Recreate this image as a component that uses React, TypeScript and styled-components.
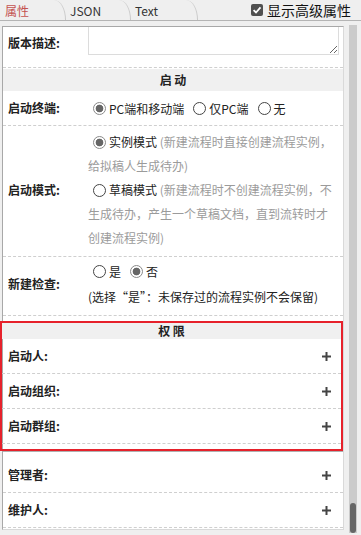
import React from 'react'
import styled, { createGlobalStyle } from 'styled-components'

const GlobalStyle = createGlobalStyle`
  html, body {
    margin: 0;
    padding: 0;
    background: #efefef;
  }
  body {
    font-family: "Noto Sans CJK SC", "Microsoft YaHei", sans-serif;
    font-size: 12px;
    color: #222;
  }
  * {
    box-sizing: border-box;
  }
`

function Radio({ checked }: { checked?: boolean }) {
  return <RadioDot $checked={!!checked} />
}

const plus = (
  <svg width="9" height="9" viewBox="0 0 9 9">
    <path d="M4.5 0v9M0 4.5h9" stroke="#444" strokeWidth="2" />
  </svg>
)

const checkIcon = (
  <svg width="12" height="12" viewBox="0 0 12 12">
    <rect x="0" y="0" width="12" height="12" rx="2" fill="#505050" />
    <path d="M2.6 6.1 L5 8.5 L9.5 3.4" stroke="#fff" strokeWidth="1.8" fill="none" />
  </svg>
)

function App() {
  return (
    <Page>
      <GlobalStyle />
      <TabBar>
        <Tab $w={66} $active>属性</Tab>
        <Tab $w={65}>JSON</Tab>
        <Tab $w={67}>Text</Tab>
        <Spacer />
        <AdvancedToggle>
          {checkIcon}
          <span>显示高级属性</span>
        </AdvancedToggle>
      </TabBar>

      <Main>
        <Panel>
          <DescRow>
            <Label>版本描述:</Label>
            <TextArea />
          </DescRow>

          <SectionHeader $h={22} $top={1}>启 动</SectionHeader>
          <FieldRow $h={35}>
            <Label>启动终端:</Label>
            <RadioGroup>
              <Option><Radio checked />PC端和移动端</Option>
              <Option><Radio />仅PC端</Option>
              <Option><Radio />无</Option>
            </RadioGroup>
          </FieldRow>
          <FieldRow $h={131} $pad="4px 4px 6px 5px">
            <Label>启动模式:</Label>
            <div>
              <ModeLine>
                <Radio checked />实例模式 <Hint>(新建流程时直接创建流程实例，给拟稿人生成待办)</Hint>
              </ModeLine>
              <ModeLine>
                <Radio />草稿模式 <Hint>(新建流程时不创建流程实例，不生成待办，产生一个草稿文档，直到流转时才创建流程实例)</Hint>
              </ModeLine>
            </div>
          </FieldRow>
          <FieldRow $h={59} $pad="2px 4px 6px 5px">
            <Label>新建检查:</Label>
            <div>
              <RadioGroup>
                <Option><Radio />是</Option>
                <Option><Radio checked />否</Option>
              </RadioGroup>
              <NoteLine>(选择“是”：未保存过的流程实例不会保留)</NoteLine>
            </div>
          </FieldRow>

          <PermSection>
            <SectionHeader $h={16}>权 限</SectionHeader>
            <ActionRow $pl={6} $pr={10}><Label>启动人:</Label>{plus}</ActionRow>
            <ActionRow $pl={6} $pr={10}><Label>启动组织:</Label>{plus}</ActionRow>
            <ActionRow $pl={6} $pr={10}><Label>启动群组:</Label>{plus}</ActionRow>
          </PermSection>

          <OtherSection>
            <ActionRow $pl={5} $pr={12}><Label>管理者:</Label>{plus}</ActionRow>
            <ActionRow $pl={5} $pr={12}><Label>维护人:</Label>{plus}</ActionRow>
          </OtherSection>
        </Panel>

        <ScrollTrack>
          <ScrollThumb />
        </ScrollTrack>
      </Main>
    </Page>
  )
}

const Page = styled.div`
  width: 361px;
  height: 535px;
  display: flex;
  flex-direction: column;
  overflow: hidden;
`

const TabBar = styled.div`
  height: 21px;
  display: flex;
  align-items: stretch;
  border-bottom: 1px solid #b4b4b4;
  flex-shrink: 0;
`

const Tab = styled.div<{ $w: number; $active?: boolean }>`
  width: ${(p) => p.$w}px;
  display: flex;
  align-items: center;
  padding-left: 4px;
  font-size: 12px;
  color: ${(p) => (p.$active ? '#c4524f' : '#333')};
  border-right: 1px solid #c9c9c9;
  border-top-right-radius: 12px 20px;

  &:first-child {
    padding-left: 5px;
  }
`

const Spacer = styled.div`
  flex: 1;
`

const AdvancedToggle = styled.div`
  display: flex;
  align-items: center;
  gap: 4px;
  margin-right: 10px;
  font-size: 14px;
  color: #111;
`

const Main = styled.div`
  display: flex;
  padding: 5px 0 0 2px;
  flex: 1;
`

const Panel = styled.div`
  width: 342px;
  height: 504px;
  background: #fff;
  border: 1px solid;
  border-color: #a8a8a8 #d9d9d9 #d9d9d9 #a8a8a8;
  display: flex;
  flex-direction: column;
  justify-content: flex-end;
  overflow-x: visible;
  overflow-y: clip;
  padding-bottom: 1px;

  > * {
    flex-shrink: 0;
  }
`

const Label = styled.span`
  font-weight: bold;
  color: #222;
  line-height: 20px;
`

const DescRow = styled.div`
  display: grid;
  grid-template-columns: 80px 1fr;
  align-items: end;
  padding: 4px 4px 12px 5px;
  border-bottom: 1px dashed #cfcfcf;

  > span {
    margin-bottom: 2px;
  }
`

const TextArea = styled.textarea`
  display: block;
  width: 100%;
  height: 44px;
  margin: 0;
  border: 1px solid #dcdcdc;
  resize: vertical;
  font-family: inherit;
`

const SectionHeader = styled.div<{ $h: number; $top?: number }>`
  height: ${(p) => p.$h}px;
  line-height: ${(p) => p.$h}px;
  margin-top: ${(p) => p.$top ?? 0}px;
  background: #f0f0f0;
  text-align: center;
  font-weight: bold;
  color: #222;
`

const FieldRow = styled.div<{ $h: number; $pad?: string }>`
  display: grid;
  grid-template-columns: 80px 1fr;
  align-items: center;
  height: ${(p) => p.$h}px;
  padding: ${(p) => p.$pad ?? '0 4px 0 5px'};
  border-bottom: 1px dashed #cfcfcf;
`

const RadioGroup = styled.div`
  display: flex;
  align-items: center;
  height: 24px;
`

const Option = styled.span`
  display: inline-flex;
  align-items: center;
  margin-right: 4px;
  color: #222;
`

const RadioDot = styled.span<{ $checked: boolean }>`
  display: inline-block;
  width: 13px;
  height: 13px;
  margin: 0 3px 0 5px;
  border-radius: 50%;
  border: 1px solid ${(p) => (p.$checked ? '#8a8a8a' : '#444')};
  background: ${(p) =>
    p.$checked ? 'radial-gradient(circle, #666 0 3.5px, #fff 4.2px)' : '#fff'};
  vertical-align: -2px;
`

const ModeLine = styled.div`
  line-height: 24px;
  color: #222;
`

const Hint = styled.span`
  color: #9b9b9b;
`

const NoteLine = styled.div`
  line-height: 24px;
  margin-top: 2px;
  color: #222;
`

const PermSection = styled.div`
  margin: 5px 0 0 -3px;
  border: 2px solid #e6212b;
  padding-bottom: 5px;
`

const ActionRow = styled.div<{ $pl: number; $pr: number }>`
  display: flex;
  justify-content: space-between;
  align-items: center;
  height: 35px;
  padding: 0 ${(p) => p.$pr}px 0 ${(p) => p.$pl}px;
  border-bottom: 1px dashed #cfcfcf;
`

const OtherSection = styled.div`
  border-top: 1px solid #b0b0b0;
  padding-top: 6px;
`

const ScrollTrack = styled.div`
  width: 8px;
  height: 508px;
  margin: -1px 0 0 5px;
  background: #cbcbcb;
  display: flex;
  flex-direction: column;
  justify-content: flex-end;
  padding: 0 1px;
`

const ScrollThumb = styled.div`
  height: 30px;
  background: #666;
  border-radius: 4px;
`

export default App
